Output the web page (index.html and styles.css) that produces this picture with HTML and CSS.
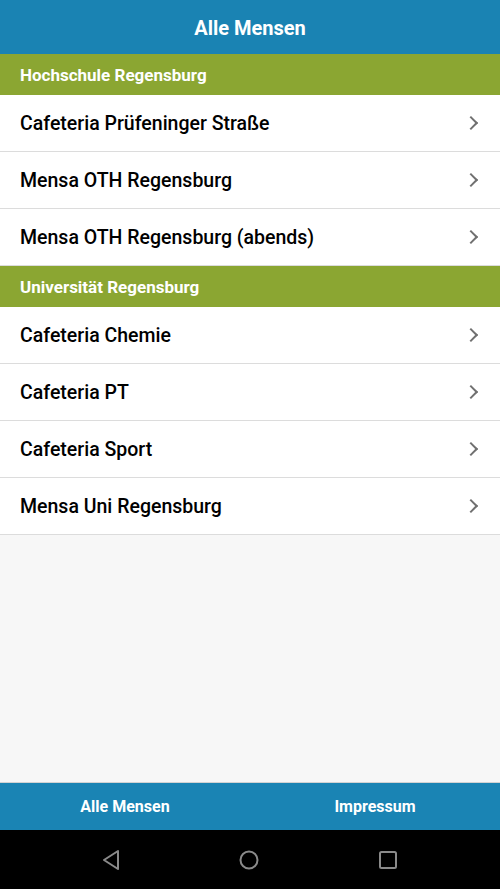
FILE: index.html
```html
<!DOCTYPE html>
<html lang="de">
<head>
    <meta charset="UTF-8">
    <title>Alle Mensen</title>
    <link rel="stylesheet" href="styles.css">
</head>
<body>
    <div class="app">
        <header class="top-bar">Alle Mensen</header>

        <main class="content">
            <div class="section">Hochschule Regensburg</div>
            <ul class="list">
                <li class="item">Cafeteria Prüfeninger Straße<span class="chevron"></span></li>
                <li class="item">Mensa OTH Regensburg<span class="chevron"></span></li>
                <li class="item">Mensa OTH Regensburg (abends)<span class="chevron"></span></li>
            </ul>
            <div class="section">Universität Regensburg</div>
            <ul class="list">
                <li class="item">Cafeteria Chemie<span class="chevron"></span></li>
                <li class="item">Cafeteria PT<span class="chevron"></span></li>
                <li class="item">Cafeteria Sport<span class="chevron"></span></li>
                <li class="item">Mensa Uni Regensburg<span class="chevron"></span></li>
            </ul>
        </main>

        <nav class="tabs">
            <div class="tab">Alle Mensen</div>
            <div class="tab">Impressum</div>
        </nav>

        <div class="system-nav">
            <svg width="20" height="22" viewBox="0 0 20 22">
                <path d="M17 2 L3 11 L17 20 Z" fill="none" stroke="#8a8a8a" stroke-width="2" stroke-linejoin="round"/>
            </svg>
            <svg width="22" height="22" viewBox="0 0 22 22">
                <circle cx="11" cy="11" r="8.5" fill="none" stroke="#8a8a8a" stroke-width="2"/>
            </svg>
            <svg width="22" height="22" viewBox="0 0 22 22">
                <rect x="3" y="3" width="16" height="16" rx="1.5" fill="none" stroke="#8a8a8a" stroke-width="2"/>
            </svg>
        </div>
    </div>
</body>
</html>
```

FILE: styles.css
```css
html, body {
    margin: 0;
    padding: 0;
}
body {
    font-family: Roboto, "Liberation Sans", sans-serif;
    background-color: #f7f7f7;
}
.app {
    display: flex;
    flex-direction: column;
    height: 889px;
}
.top-bar {
    height: 54px;
    background-color: #1a83b3;
    color: white;
    font-size: 20px;
    font-weight: bold;
    display: flex;
    align-items: center;
    justify-content: center;
    padding-top: 1px;
    box-sizing: border-box;
}
.content {
    flex: 1;
    background-color: #f7f7f7;
}
.section {
    height: 41px;
    background-color: #8ba632;
    color: white;
    font-size: 17px;
    font-weight: bold;
    display: flex;
    align-items: center;
    padding-left: 20px;
}
.list {
    list-style: none;
    margin: 0;
    padding: 0;
}
.item {
    height: 56px;
    background-color: white;
    border-bottom: 1px solid #dcdcdc;
    display: flex;
    align-items: center;
    justify-content: space-between;
    padding: 0 20px 0 20px;
    font-size: 19.5px;
    font-weight: 500;
    color: #000;
}
.chevron {
    width: 8px;
    height: 8px;
    border-top: 2px solid #707070;
    border-right: 2px solid #707070;
    transform: rotate(45deg);
    margin-right: 4px;
}
.tabs {
    height: 47px;
    background-color: #1a84b4;
    border-top: 1px solid #d3d3d3;
    display: flex;
}
.tab {
    flex: 1;
    color: white;
    font-size: 16px;
    font-weight: bold;
    display: flex;
    align-items: center;
    justify-content: center;
}
.system-nav {
    height: 59px;
    background-color: black;
    display: flex;
    align-items: center;
    justify-content: center;
    gap: 117px;
}
```
